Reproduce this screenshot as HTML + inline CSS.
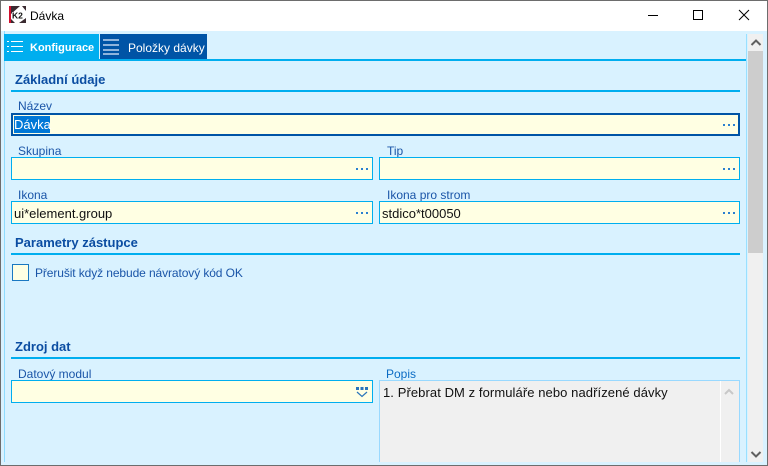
<!DOCTYPE html>
<html><head><meta charset="utf-8"><style>
html,body{margin:0;padding:0}
body{width:768px;height:466px;overflow:hidden;position:relative;background:#d9f2ff;font-family:"Liberation Sans",sans-serif}
div,svg{position:absolute;box-sizing:border-box}
.t{white-space:nowrap;font-size:12px;line-height:14px;color:#1a55a8}
.h{white-space:nowrap;font-size:13px;line-height:14px;font-weight:bold;color:#0b4da2}
.l{height:2px;background:#00aeef}
.i{background:#ffffe3;border:1px solid #00aeef}
.v{white-space:nowrap;font-size:13px;line-height:14px;color:#111}
.d{width:2px;height:2px;background:#2a80d0}
</style></head><body>
<div style="left:0;top:0;width:768px;height:31px;background:#fff"></div>
<svg style="left:9px;top:6px" width="17" height="17" viewBox="0 0 17 17"><rect width="17" height="17" fill="#fff"/><rect x="0" y="0" width="2" height="17" fill="#d0102e"/><path d="M2 0h9L2 8zM17 0v5l-4-5zM2 17v-4l4 4zM17 17h-7l7-5z" fill="#3a2a30"/><rect x="3" y="6" width="13" height="7" fill="#fff"/><text x="3" y="12.500" font-family="Liberation Sans" font-size="8.500" font-weight="bold" fill="#111">K2</text></svg>
<div class="v" style="left:30px;top:9px;font-size:12px;color:#000">Dávka</div>
<svg style="left:640px;top:8px" width="125" height="16" viewBox="0 0 125 16" fill="none" stroke="#000"><path d="M8 7.500h10" /><rect x="53.500" y="2.500" width="9" height="9"/><path d="M99 2l10 10M109 2l-10 10"/></svg>

<div style="left:4px;top:31px;width:1px;height:431px;background:#8fdcff"></div>
<div style="left:4px;top:34px;width:95px;height:25px;background:#00aeef"></div>
<div style="left:100px;top:34px;width:107px;height:25px;background:#0054a6"></div>
<div class="l" style="left:4px;top:59px;width:743px"></div>
<svg style="left:7px;top:40px" width="17" height="13" fill="none" stroke="#fff"><path d="M4 1.500h12M4 6.500h12M4 11.500h12" /><path d="M0 1.500h2M0 6.500h2M0 11.500h2" /></svg>
<svg style="left:103px;top:38px" width="16" height="17" fill="none" stroke="#8fb4dc" stroke-width="2"><path d="M0 2h16M0 7h16M0 12h16M0 16h16"/></svg>
<div class="h" style="left:30px;top:41px;color:#fff;font-size:11px">Konfigurace</div>
<div class="h" style="left:128px;top:41px;color:#fff;font-size:12px;font-weight:normal">Položky dávky</div>

<div style="left:746px;top:34px;width:1px;height:428px;background:#99e0ff"></div>
<div style="left:748px;top:34px;width:15px;height:428px;background:#f0f0f0"></div>
<div style="left:748px;top:51px;width:15px;height:202px;background:#cdcdcd"></div>
<svg style="left:750px;top:38px" width="12" height="10" fill="none" stroke="#606060" stroke-width="2"><path d="M1.500 7l4.500-4.500 4.500 4.500"/></svg>
<svg style="left:750px;top:450px" width="12" height="10" fill="none" stroke="#606060" stroke-width="2"><path d="M1.500 2l4.500 4.500 4.500-4.500"/></svg>

<div class="h" style="left:15px;top:73px">Základní údaje</div>
<div class="l" style="left:11px;top:90px;width:729px"></div>
<div class="t" style="left:18px;top:99px">Název</div>
<div class="i" style="left:11px;top:113px;width:729px;height:23px;border:2px solid #0054a6"></div>
<div style="left:14px;top:116px;width:36px;height:17px;background:#0078d7"></div>
<div class="v" style="left:14px;top:118px;color:#fff">Dávka</div>
<div class="d" style="left:723px;top:124px"></div><div class="d" style="left:728px;top:124px"></div><div class="d" style="left:733px;top:124px"></div>

<div class="t" style="left:18px;top:144px">Skupina</div>
<div class="t" style="left:387px;top:144px">Tip</div>
<div class="i" style="left:11px;top:157px;width:362px;height:23px"></div>
<div class="i" style="left:379px;top:157px;width:361px;height:23px"></div>
<div class="d" style="left:356px;top:168px"></div><div class="d" style="left:361px;top:168px"></div><div class="d" style="left:366px;top:168px"></div>
<div class="d" style="left:723px;top:168px"></div><div class="d" style="left:728px;top:168px"></div><div class="d" style="left:733px;top:168px"></div>

<div class="t" style="left:18px;top:188px">Ikona</div>
<div class="t" style="left:387px;top:188px">Ikona pro strom</div>
<div class="i" style="left:11px;top:201px;width:362px;height:23px"></div>
<div class="i" style="left:379px;top:201px;width:361px;height:23px"></div>
<div class="v" style="left:14px;top:207px">ui*element.group</div>
<div class="v" style="left:382px;top:207px">stdico*t00050</div>
<div class="d" style="left:356px;top:212px"></div><div class="d" style="left:361px;top:212px"></div><div class="d" style="left:366px;top:212px"></div>
<div class="d" style="left:723px;top:212px"></div><div class="d" style="left:728px;top:212px"></div><div class="d" style="left:733px;top:212px"></div>

<div class="h" style="left:15px;top:236px">Parametry zástupce</div>
<div class="l" style="left:11px;top:253px;width:729px"></div>
<div class="i" style="left:12px;top:264px;width:17px;height:17px;border-color:#1a78c2"></div>
<div class="t" style="left:35px;top:266px;letter-spacing:-.1px">Přerušit když nebude návratový kód OK</div>

<div class="h" style="left:15px;top:340px">Zdroj dat</div>
<div class="l" style="left:11px;top:357px;width:729px"></div>
<div class="t" style="left:18px;top:367px">Datový modul</div>
<div class="t" style="left:386px;top:367px;color:#0c6cc4">Popis</div>
<div class="i" style="left:11px;top:380px;width:362px;height:23px"></div>
<svg style="left:355px;top:386px" width="14" height="12" fill="none"><path d="M1 1h3v3H1zM5.500 1h3v3h-3zM10 1h3v3h-3z" fill="#2a75bb"/><path d="M2 6l5 4.500 5-4.500" stroke="#2a75bb" stroke-width="1.200"/></svg>
<div style="left:379px;top:380px;width:361px;height:82px;background:#f0f0f0;border:1px solid #99d9ff;border-bottom:0"></div>
<div style="left:720px;top:381px;width:1px;height:81px;background:#fff"></div>
<div class="v" style="left:383px;top:386px;letter-spacing:.08px">1. Přebrat DM z formuláře nebo nadřízené dávky</div>
<svg style="left:724px;top:388px" width="10" height="8" fill="none" stroke="#c8c8c8" stroke-width="2"><path d="M1 6l4-4 4 4"/></svg>

<div style="left:0;top:0;width:768px;height:1px;background:#6d6d6d"></div>
<div style="left:0;top:0;width:1px;height:466px;background:#6d6d6d"></div>
<div style="left:767px;top:0;width:1px;height:466px;background:#6d6d6d"></div>
<div style="left:0;top:465px;width:768px;height:1px;background:#6d6d6d"></div>
<div style="left:1px;top:462px;width:766px;height:3px;background:#d9f2ff"></div>
</body></html>
